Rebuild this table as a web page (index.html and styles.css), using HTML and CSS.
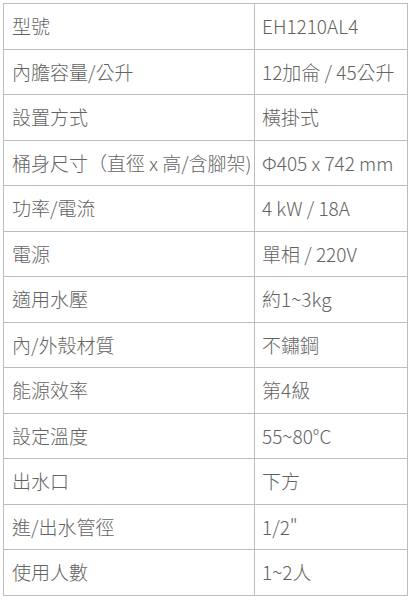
FILE: index.html
```html
<!DOCTYPE html>
<html lang="zh-Hant">
<head>
<meta charset="utf-8">
<link rel="stylesheet" href="styles.css">
</head>
<body>
<table class="spec">
  <tr><td class="k">型號</td><td class="v">EH1210AL4</td></tr>
  <tr><td class="k">內膽容量/公升</td><td class="v">12加侖 / 45公升</td></tr>
  <tr><td class="k">設置方式</td><td class="v">橫掛式</td></tr>
  <tr><td class="k">桶身尺寸（直徑 x 高/含腳架)</td><td class="v">Φ405 x 742 mm</td></tr>
  <tr><td class="k">功率/電流</td><td class="v">4 kW / 18A</td></tr>
  <tr><td class="k">電源</td><td class="v">單相 / 220V</td></tr>
  <tr><td class="k">適用水壓</td><td class="v">約1~3kg</td></tr>
  <tr><td class="k">內/外殼材質</td><td class="v">不鏽鋼</td></tr>
  <tr><td class="k">能源效率</td><td class="v">第4級</td></tr>
  <tr><td class="k">設定溫度</td><td class="v">55~80°C</td></tr>
  <tr><td class="k">出水口</td><td class="v">下方</td></tr>
  <tr><td class="k">進/出水管徑</td><td class="v">1/2"</td></tr>
  <tr><td class="k">使用人數</td><td class="v">1~2人</td></tr>
</table>
</body>
</html>
```
FILE: styles.css
```css
html, body {
  margin: 0;
  background: #ffffff;
}
body {
  padding: 3px;
  font-family: "Noto Sans CJK TC", "Noto Sans", sans-serif;
  color: #636363;
}
.spec {
  border-collapse: collapse;
  width: 405px;
  table-layout: fixed;
}
.spec tr {
  height: 45.5px;
}
.spec td {
  border: 1px solid #bdbdbd;
  font-size: 19px;
  font-weight: 300;
  line-height: 22px;
  padding: 0;
  vertical-align: middle;
  white-space: nowrap;
}
.spec .k {
  width: 242px;
  padding-left: 8px;
}
.spec .v {
  padding-left: 7px;
}
```
